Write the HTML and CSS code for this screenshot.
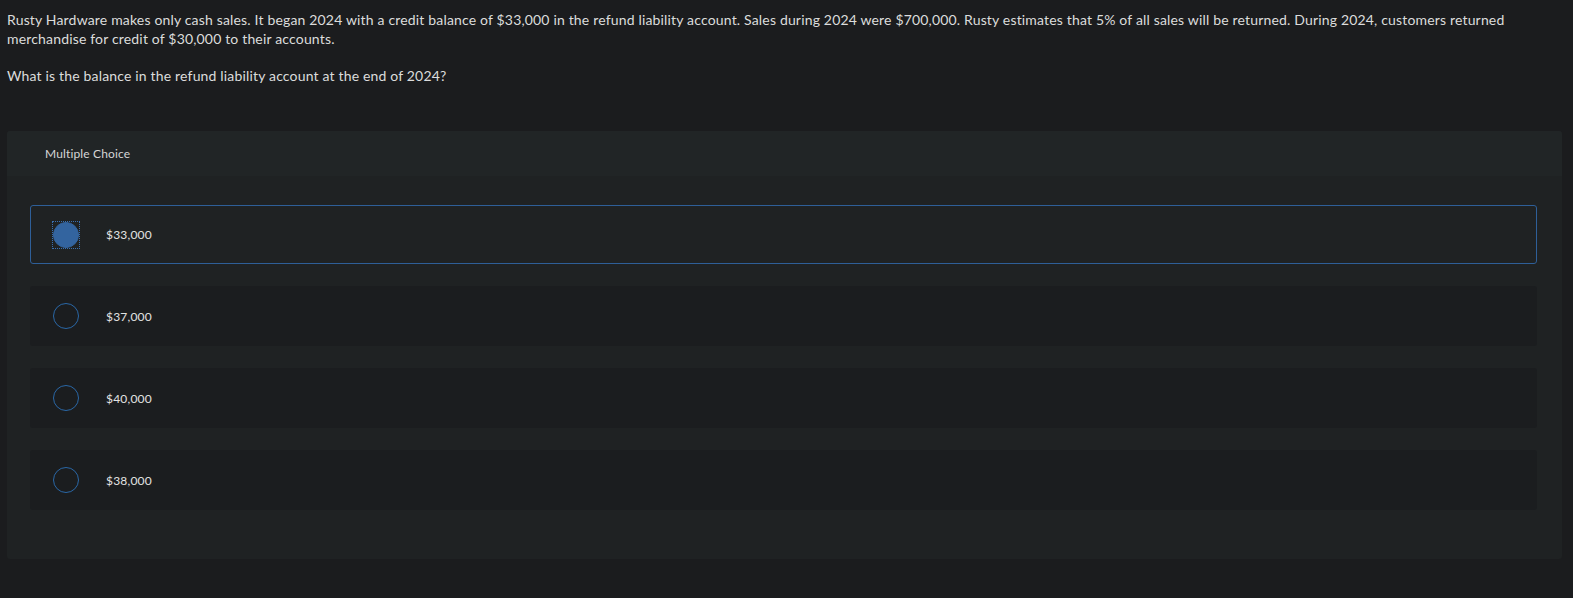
FILE: index.html
```html
<!DOCTYPE html>
<html>
<head>
<meta charset="utf-8">
<link rel="stylesheet" href="styles.css">
</head>
<body>
<div class="question">
  <p>Rusty Hardware makes only cash sales. It began 2024 with a credit balance of $33,000 in the refund liability account. Sales during 2024 were $700,000. Rusty estimates that 5% of all sales will be returned. During 2024, customers returned merchandise for credit of $30,000 to their accounts.</p>
  <p>What is the balance in the refund liability account at the end of 2024?</p>
</div>
<div class="panel">
  <div class="panel-head">Multiple Choice</div>
  <div class="options">
    <div class="option selected"><span class="focus"><span class="radio checked"></span></span><span class="label">$33,000</span></div>
    <div class="option"><span class="radio"></span><span class="label">$37,000</span></div>
    <div class="option"><span class="radio"></span><span class="label">$40,000</span></div>
    <div class="option"><span class="radio"></span><span class="label">$38,000</span></div>
  </div>
</div>
</body>
</html>
```
FILE: styles.css
```css
html, body {
  margin: 0;
  padding: 0;
  background: #1b1c1e;
}
body {
  font-family: Lato, "Liberation Sans", sans-serif;
  color: #dcdcdc;
  padding: 10px 11px 0 7px;
}
.question p {
  margin: 0 0 18px 0;
  font-size: 14px;
  line-height: 19px;
  letter-spacing: 0.17px;
}
.question {
  padding-bottom: 28px;
}
.panel {
  background: #1f2223;
  border-radius: 3px;
  padding-bottom: 49px;
}
.panel-head {
  background: #212526;
  height: 45px;
  display: flex;
  align-items: center;
  padding-left: 38px;
  font-size: 12px;
  letter-spacing: 0.15px;
  color: #d6d6d6;
  border-radius: 3px 3px 0 0;
}
.options {
  padding: 29px 25px 0 23px;
  display: flex;
  flex-direction: column;
  gap: 22px;
}
.option {
  height: 60px;
  box-sizing: border-box;
  background: #1b1d1f;
  border-radius: 3px;
  display: flex;
  align-items: center;
  padding-left: 22px;
  border: 1px solid transparent;
}
.option.selected {
  height: 59px;
  background: #1f2223;
  border-color: #2e5f98;
}
.focus {
  display: flex;
  flex: none;
  outline: 1px dotted #3a6fb0;
}
.radio {
  width: 26px;
  height: 26px;
  box-sizing: border-box;
  border-radius: 50%;
  border: 1.5px solid #2a67a6;
  flex: none;
}
.radio.checked {
  background: #33649f;
  border-color: #33649f;
}
.label {
  margin-left: 27px;
  font-size: 12px;
  letter-spacing: 0.2px;
  color: #e2e2e2;
}
```
